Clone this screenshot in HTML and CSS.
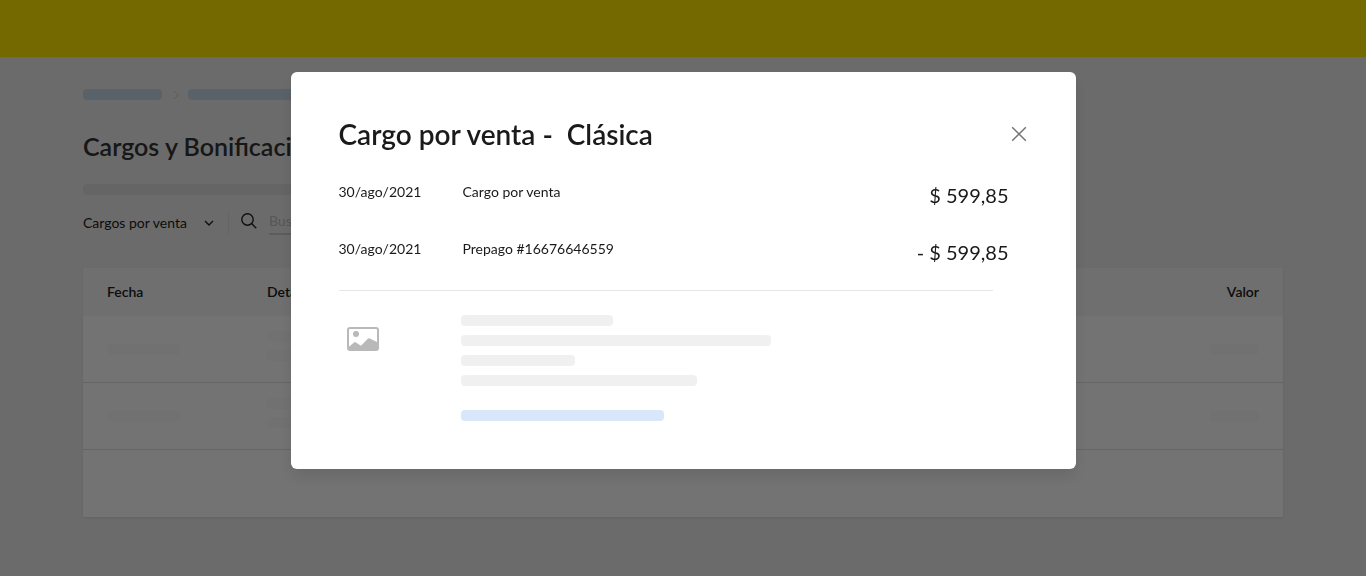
FILE: index.html
```
<!DOCTYPE html>
<html lang="es">
<head>
    <meta charset="UTF-8">
    <meta name="viewport" content="width=device-width, initial-scale=1.0">
    <title>Cargos y Bonificaciones</title>
    <link rel="stylesheet" href="styles.css">
</head>
<body>
    <header class="topbar"></header>

    <main class="page">
        <div class="breadcrumb">
            <span class="bar bar-link crumb"></span>
            <svg class="crumb-arrow" width="6" height="10" viewBox="0 0 6 10"><path d="M1 1l4 4-4 4" fill="none" stroke="#ccc"/></svg>
            <span class="bar bar-link crumb-long"></span>
        </div>

        <h1 class="page-title">Cargos y Bonificaciones</h1>
        <div class="bar page-text"></div>

        <div class="filters">
            <button class="filter-button" type="button">
                Cargos por venta
                <svg width="10" height="6" viewBox="0 0 10 6"><path d="M1 1l4 4 4-4" fill="none" stroke="#222" stroke-width="1.4"/></svg>
            </button>
            <label class="search">
                <svg width="16" height="16" viewBox="0 0 16 16" fill="none" stroke="#222" stroke-width="1.4"><circle cx="6.500" cy="6.500" r="5.700"/><path d="M10.600 10.600l4.700 4.700"/></svg>
                <input type="search" placeholder="Buscar" aria-label="Buscar">
            </label>
        </div>

        <table class="charges">
            <thead>
                <tr>
                    <th class="col-date">Fecha</th>
                    <th>Detalle</th>
                    <th class="col-value">Valor</th>
                </tr>
            </thead>
            <tbody>
                <tr>
                    <td><div class="bar bar-faint w-date"></div></td>
                    <td class="col-detail"><div class="bar bar-faint w-detail"></div><div class="bar bar-faint w-detail"></div></td>
                    <td class="col-value"><div class="bar bar-faint w-value"></div></td>
                </tr>
                <tr>
                    <td><div class="bar bar-faint w-date"></div></td>
                    <td class="col-detail"><div class="bar bar-faint w-detail"></div><div class="bar bar-faint w-detail"></div></td>
                    <td class="col-value"><div class="bar bar-faint w-value"></div></td>
                </tr>
                <tr>
                    <td></td>
                    <td></td>
                    <td></td>
                </tr>
            </tbody>
        </table>
    </main>

    <div class="overlay">
        <section class="modal" role="dialog" aria-modal="true" aria-labelledby="modal-title">
            <div class="modal-header">
                <h2 class="modal-title" id="modal-title">Cargo por venta -&nbsp; Clásica</h2>
                <button class="close" type="button" aria-label="Cerrar">
                    <svg width="16" height="16" viewBox="0 0 16 16"><path d="M1.200 1.200l13.600 13.600M14.800 1.200L1.200 14.800" fill="none" stroke="#737373" stroke-width="1.5"/></svg>
                </button>
            </div>

            <ul class="entries">
                <li class="entry">
                    <span>30/ago/2021</span>
                    <span>Cargo por venta</span>
                    <span class="amount">$ 599,85</span>
                </li>
                <li class="entry">
                    <span>30/ago/2021</span>
                    <span>Prepago #16676646559</span>
                    <span class="amount">- $ 599,85</span>
                </li>
            </ul>

            <div class="product">
                <svg class="product-image" width="32" height="24" viewBox="0 0 32 24">
                    <rect x="1" y="1" width="30" height="22" rx="2" fill="none" stroke="#b9b9b9" stroke-width="2"/>
                    <circle cx="9" cy="7" r="3" fill="#b9b9b9"/>
                    <path d="M1 20.500l6.100-5.100q.9-.8 1.800 0L14 18.800l6.800-7.100q.9-.9 2-.3L31 15.500v7H1z" fill="#b9b9b9"/>
                </svg>
                <div class="product-info">
                    <div class="bar w-line-1"></div>
                    <div class="bar w-line-2"></div>
                    <div class="bar w-line-3"></div>
                    <div class="bar w-line-4"></div>
                    <div class="bar bar-link w-link"></div>
                </div>
            </div>
        </section>
    </div>
</body>
</html>
```
FILE: styles.css
```
* {
    box-sizing: border-box;
}

body {
    margin: 0;
    background: #ededed;
    color: #1a1a1a;
    font-family: Lato, "Liberation Sans", sans-serif;
    font-size: 14px;
    line-height: 20px;
}

button,
input {
    padding: 0;
    border: 0;
    background: none;
    color: inherit;
    font: inherit;
}

.topbar {
    height: 57px;
    background: #ffe900;
}

.page {
    max-width: 1248px;
    margin: 0 auto;
    padding: 32px 24px 48px;
}

/* Placeholder bars */
.bar {
    height: 11px;
    border-radius: 4px;
    background: #f0f0f0;
}

.bar-link {
    background: #d9e7fa;
}

.bar-faint {
    background: #fbfbfb;
}

.breadcrumb {
    display: flex;
    align-items: center;
}

.breadcrumb .bar-link {
    background: #c8d9e8;
}

.crumb {
    width: 79px;
}

.crumb-arrow {
    margin: 0 9px 0 11px;
}

.crumb-long {
    width: 160px;
}

.page-title {
    margin: 30px 0 22px;
    color: #333;
    font-size: 25px;
    font-weight: 600;
    line-height: 32px;
}

.page-text {
    width: 480px;
    background: #e0e0e0;
}

.filters {
    display: flex;
    align-items: center;
    margin: 16px 0 33px;
}

.filter-button {
    display: flex;
    align-items: center;
    gap: 17px;
    height: 22px;
    padding-right: 14px;
    border-right: 1px solid #dedede;
}

.search {
    display: flex;
    align-items: center;
    gap: 12px;
    margin-left: 12px;
}

.search svg {
    margin-bottom: 4px;
}

.search input {
    width: 200px;
    height: 24px;
    padding-bottom: 3px;
    border-bottom: 2px solid #ccc;
}

.search input::placeholder {
    color: #bfbfbf;
}

.charges {
    width: 100%;
    border-spacing: 0;
    background: #fff;
    box-shadow: 0 1px 2px rgba(0, 0, 0, 0.08);
}

.charges th {
    height: 48px;
    padding: 0 24px;
    background: #f5f5f5;
    font-weight: 600;
    text-align: left;
}

.charges td {
    height: 67px;
    padding: 0 24px;
    border-bottom: 1px solid #e0e0e0;
}

.charges tr:last-child td {
    border-bottom: 0;
}

.charges .col-date {
    width: 160px;
}

.charges .col-detail {
    padding-bottom: 6px;
}

.charges .col-value {
    width: 160px;
    text-align: right;
}

.w-date {
    width: 73px;
}

.w-detail {
    width: 240px;
}

.w-detail + .w-detail {
    margin-top: 8px;
}

.w-value {
    width: 49px;
    margin-left: auto;
}

/* Modal */
.overlay {
    position: fixed;
    inset: 0;
    padding-top: 72px;
    overflow: auto;
    background: rgba(0, 0, 0, 0.55);
}

.modal {
    width: 100%;
    max-width: 785px;
    margin: 0 auto;
    padding: 48px;
    border-radius: 6px;
    background: #fff;
    box-shadow: 0 8px 16px rgba(0, 0, 0, 0.1);
}

.modal-header {
    display: flex;
    align-items: center;
    justify-content: space-between;
}

.modal-title {
    margin: 0;
    font-size: 28px;
    font-weight: 600;
    line-height: 28px;
}

.close {
    display: flex;
    padding: 1px;
    cursor: pointer;
}

.entries {
    display: grid;
    gap: 31px;
    margin: 0;
    padding: 34px 19px 25px 0;
    list-style: none;
}

.entry {
    display: grid;
    grid-template-columns: 124px 1fr auto;
}

.amount {
    font-size: 20px;
    line-height: 26px;
}

.product {
    display: flex;
    align-items: flex-start;
    margin-right: 35px;
    padding-top: 24px;
    border-top: 1px solid #e6e6e6;
}

.product-image {
    flex: none;
    margin: 12px 82px 0 8px;
}

.product-info {
    display: flex;
    flex-direction: column;
    gap: 9px;
}

.w-line-1 {
    width: 152px;
}

.w-line-2 {
    width: 310px;
}

.w-line-3 {
    width: 114px;
}

.w-line-4 {
    width: 236px;
}

.w-link {
    width: 203px;
    margin-top: 15px;
}

@media (max-width: 600px) {
    .modal {
        padding: 24px;
    }

    .product-image {
        margin-right: 24px;
    }
}
```
